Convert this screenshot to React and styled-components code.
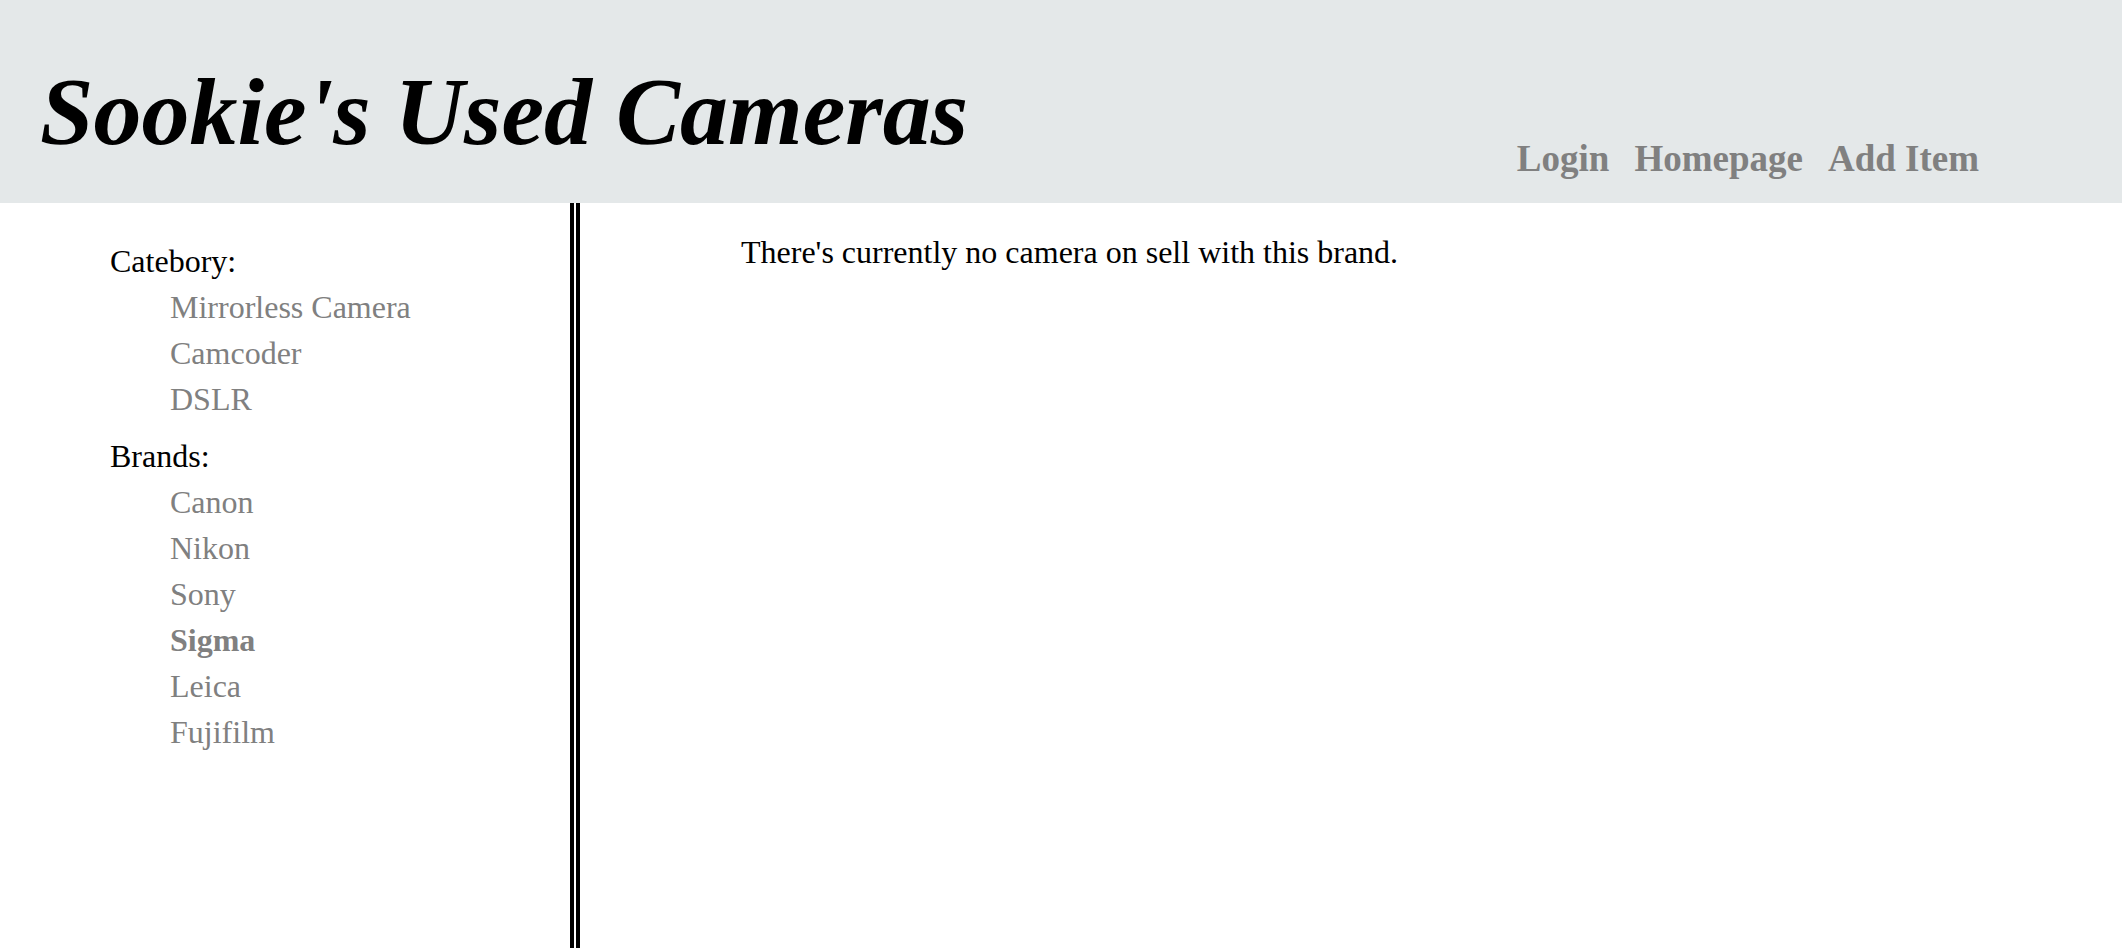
import React from "react";
import styled, { createGlobalStyle } from "styled-components";

const categories = ["Mirrorless Camera", "Camcoder", "DSLR"];
const brands = ["Canon", "Nikon", "Sony", "Sigma", "Leica", "Fujifilm"];
const activeBrand = "Sigma";

function App() {
  return (
    <Page>
      <GlobalStyle />
      <Header>
        <Title>Sookie's Used Cameras</Title>
        <Nav>
          <NavLink href="#">Login</NavLink>
          <NavLink href="#">Homepage</NavLink>
          <NavLink href="#">Add Item</NavLink>
        </Nav>
      </Header>
      <Body>
        <Sidebar>
          <Group>
            <GroupTitle>Catebory:</GroupTitle>
            <List>
              {categories.map((c) => (
                <Item key={c}>
                  <ItemLink href="#">{c}</ItemLink>
                </Item>
              ))}
            </List>
          </Group>
          <Group>
            <GroupTitle>Brands:</GroupTitle>
            <List>
              {brands.map((b) => (
                <Item key={b}>
                  <ItemLink href="#" $active={b === activeBrand}>
                    {b}
                  </ItemLink>
                </Item>
              ))}
            </List>
          </Group>
        </Sidebar>
        <Main>
          <Message>There's currently no camera on sell with this brand.</Message>
        </Main>
      </Body>
    </Page>
  );
}

const GlobalStyle = createGlobalStyle`
  body {
    margin: 0;
    font-family: "Liberation Serif", "Times New Roman", serif;
    background: #fff;
  }
`;

const Page = styled.div`
  width: 100%;
  min-height: 100vh;
  display: flex;
  flex-direction: column;
`;

const Header = styled.header`
  height: 203px;
  background-color: #e4e8e9;
  display: flex;
  align-items: flex-start;
  padding: 0 143px 0 40px;
  box-sizing: border-box;
`;

const Title = styled.h1`
  margin: 56px 0 0 0;
  font-size: 96px;
  font-weight: bold;
  font-style: italic;
  line-height: normal;
  color: #000;
`;

const Nav = styled.nav`
  margin: 137px 0 0 auto;
  display: flex;
  gap: 25px;
`;

const NavLink = styled.a`
  font-size: 37px;
  font-weight: bold;
  line-height: normal;
  color: gray;
  text-decoration: none;
`;

const Body = styled.div`
  flex: 1;
  display: flex;
`;

const Sidebar = styled.aside`
  width: 574px;
  box-sizing: border-box;
  padding: 35px 0 0 110px;
  border-right: 4px solid #000;
  margin-right: 2px;
  font-size: 32px;
  line-height: 46px;
`;

const Group = styled.div`
  & + & {
    margin-top: 11px;
  }
`;

const GroupTitle = styled.div`
  color: #000;
`;

const List = styled.ul`
  list-style: none;
  margin: 0;
  padding: 0 0 0 60px;
`;

const Item = styled.li`
  margin: 0;
`;

const ItemLink = styled.a`
  color: gray;
  text-decoration: none;
  font-weight: ${(p) => (p.$active ? "bold" : "normal")};
`;

const Main = styled.main`
  flex: 1;
  border-left: 4px solid #000;
  padding: 31px 0 0 161px;
`;

const Message = styled.p`
  margin: 0;
  font-size: 32px;
  line-height: normal;
  color: #000;
`;

export default App;
